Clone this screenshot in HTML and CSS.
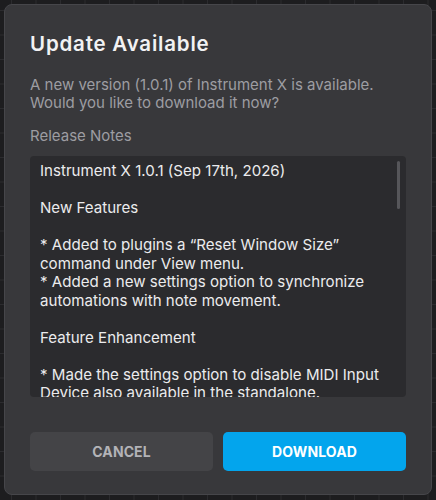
FILE: index.html
```html
<!DOCTYPE html>
<html lang="en">
<head>
<meta charset="utf-8">
<title>Update Available</title>
<link rel="stylesheet" href="styles.css">
</head>
<body>
<div class="dialog">
  <h1 class="title">Update Available</h1>
  <p class="desc">A new version (1.0.1) of Instrument X is available.<br>Would you like to download it now?</p>
  <div class="label">Release Notes</div>
  <div class="notes">
    <div class="notes-text">Instrument X 1.0.1 (Sep 17th, 2026)<br><br>New Features<br><br>* Added to plugins a “Reset Window Size”<br>command under View menu.<br>* Added a new settings option to synchronize<br>automations with note movement.<br><br>Feature Enhancement<br><br>* Made the settings option to disable MIDI Input<br>Device also available in the standalone.<br><br>Bug Fixes<br><br>* Fixed an issue with preset loading.</div>
    <div class="thumb"></div>
  </div>
  <div class="actions">
    <button class="btn btn-cancel">CANCEL</button>
    <button class="btn btn-primary">DOWNLOAD</button>
  </div>
</div>
</body>
</html>
```
FILE: styles.css
```css
html, body {
  margin: 0;
  padding: 0;
}
body {
  width: 436px;
  height: 500px;
  overflow: hidden;
  background-color: #1d1d1f;
  background-image:
    linear-gradient(to right, #2b2b2e 1px, transparent 1px),
    linear-gradient(to bottom, #2b2b2e 1px, transparent 1px);
  background-size: 24.5px 24.5px;
  background-position: 11px 10px;
  font-family: Inter, "Noto Sans", "Liberation Sans", sans-serif;
  padding: 4px;
  box-sizing: border-box;
}
.dialog {
  width: 428px;
  height: 491px;
  box-sizing: border-box;
  background: #38383b;
  border: 1px solid #46464a;
  border-radius: 8px;
  padding: 27px 25px 23px 25px;
  display: flex;
  flex-direction: column;
}
.title {
  margin: 0;
  font-size: 20.5px;
  line-height: 24px;
  font-weight: 600;
  color: #f2f2f3;
  letter-spacing: 0.8px;
}
.desc {
  margin: 20px 0 0 0;
  font-size: 15px;
  line-height: 18px;
  color: #9d9da2;
}
.label {
  margin-top: 15px;
  font-size: 15px;
  line-height: 18px;
  color: #9d9da2;
}
.notes {
  position: relative;
  margin-top: 11px;
  height: 241px;
  background: #2b2b2e;
  border-radius: 4px;
  overflow: hidden;
  padding: 6px 10px;
  box-sizing: border-box;
}
.notes-text {
  font-size: 15.1px;
  line-height: 18.5px;
  color: #ebebed;
  white-space: nowrap;
}
.thumb {
  position: absolute;
  top: 5px;
  right: 6px;
  width: 3px;
  height: 48px;
  border-radius: 2px;
  background: #56565a;
}
.actions {
  margin-top: auto;
  display: flex;
  gap: 10px;
}
.btn {
  flex: 1;
  height: 39px;
  border: none;
  border-radius: 5px;
  font-family: Inter, "Noto Sans", "Liberation Sans", sans-serif;
  font-size: 14px;
  font-weight: 700;
  letter-spacing: 0.1px;
  cursor: pointer;
}
.btn-cancel {
  background: #444447;
  color: #b3b3b7;
}
.btn-primary {
  background: #03a5ed;
  color: #ffffff;
}
```
